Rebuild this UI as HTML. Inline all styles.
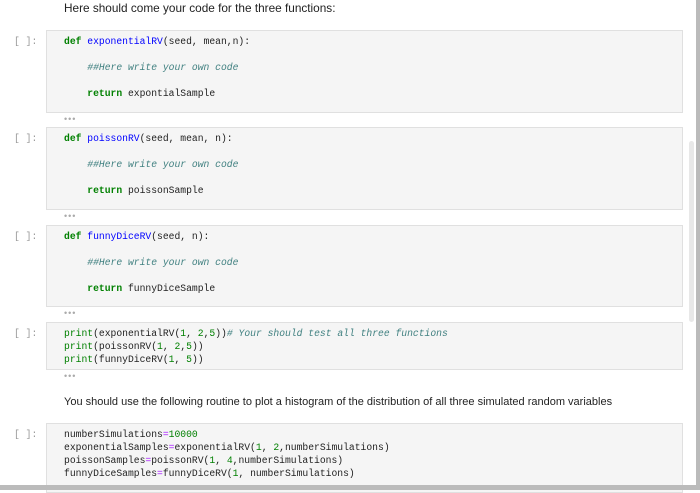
<!DOCTYPE html>
<html><head><style>
body{margin:0;width:700px;height:490px;background:#fff;position:relative;overflow:hidden;font-family:"Liberation Sans",sans-serif}
.cell{position:absolute;left:46px;width:637px;background:#f5f5f5;border:1px solid #e0e0e0;box-sizing:border-box}
.p{position:absolute;left:14px;font:9.7px "Liberation Mono",monospace;color:#999}
pre{position:absolute;left:64px;margin:0;font:9.7px/13px "Liberation Mono",monospace;color:#222}
.k{color:#008000;font-weight:bold}.f{color:#0000ff}.c{color:#408080;font-style:italic}.n{color:#008000}.o{color:#aa22ff}
.d{position:absolute;left:64px;font-size:9px;color:#aaa;letter-spacing:1px}
.t{position:absolute;left:64px;font-size:11.6px;color:#222}
</style></head><body>
<div class="t" style="top:1px;font-size:11.8px">Here should come your code for the three functions:</div>

<div class="cell" style="top:30px;height:83px"></div>
<div class="p" style="top:36px">[ ]:</div>
<pre style="top:35px"><span class="k">def</span> <span class="f">exponentialRV</span>(seed, mean,n):

    <span class="c">##Here write your own code</span>

    <span class="k">return</span> expontialSample</pre>
<div class="d" style="top:114px">•••</div>

<div class="cell" style="top:127px;height:83px"></div>
<div class="p" style="top:133px">[ ]:</div>
<pre style="top:132px"><span class="k">def</span> <span class="f">poissonRV</span>(seed, mean, n):

    <span class="c">##Here write your own code</span>

    <span class="k">return</span> poissonSample</pre>
<div class="d" style="top:211px">•••</div>

<div class="cell" style="top:225px;height:82px"></div>
<div class="p" style="top:231px">[ ]:</div>
<pre style="top:230px"><span class="k">def</span> <span class="f">funnyDiceRV</span>(seed, n):

    <span class="c">##Here write your own code</span>

    <span class="k">return</span> funnyDiceSample</pre>
<div class="d" style="top:308px">•••</div>

<div class="cell" style="top:322px;height:48px"></div>
<div class="p" style="top:328px">[ ]:</div>
<pre style="top:327px"><span class="n">print</span>(exponentialRV(<span class="n">1</span>, <span class="n">2</span>,<span class="n">5</span>))<span class="c"># Your should test all three functions</span>
<span class="n">print</span>(poissonRV(<span class="n">1</span>, <span class="n">2</span>,<span class="n">5</span>))
<span class="n">print</span>(funnyDiceRV(<span class="n">1</span>, <span class="n">5</span>))</pre>
<div class="d" style="top:371px">•••</div>

<div class="t" style="top:396px;font-size:11px">You should use the following routine to plot a histogram of the distribution of all three simulated random variables</div>

<div class="cell" style="top:423px;height:70px"></div>
<div class="p" style="top:429px">[ ]:</div>
<pre style="top:428px">numberSimulations<span class="o">=</span><span class="n">10000</span>
exponentialSamples<span class="o">=</span>exponentialRV(<span class="n">1</span>, <span class="n">2</span>,numberSimulations)
poissonSamples<span class="o">=</span>poissonRV(<span class="n">1</span>, <span class="n">4</span>,numberSimulations)
funnyDiceSamples<span class="o">=</span>funnyDiceRV(<span class="n">1</span>, numberSimulations)</pre>

<div style="position:absolute;left:689px;top:141px;width:5px;height:181px;background:#e8e8e8;border-radius:3px"></div>
<div style="position:absolute;left:696px;top:0;width:4px;height:490px;background:#bbb"></div>
<div style="position:absolute;left:0;top:485px;width:700px;height:5px;background:#bbb"></div>
</body></html>
